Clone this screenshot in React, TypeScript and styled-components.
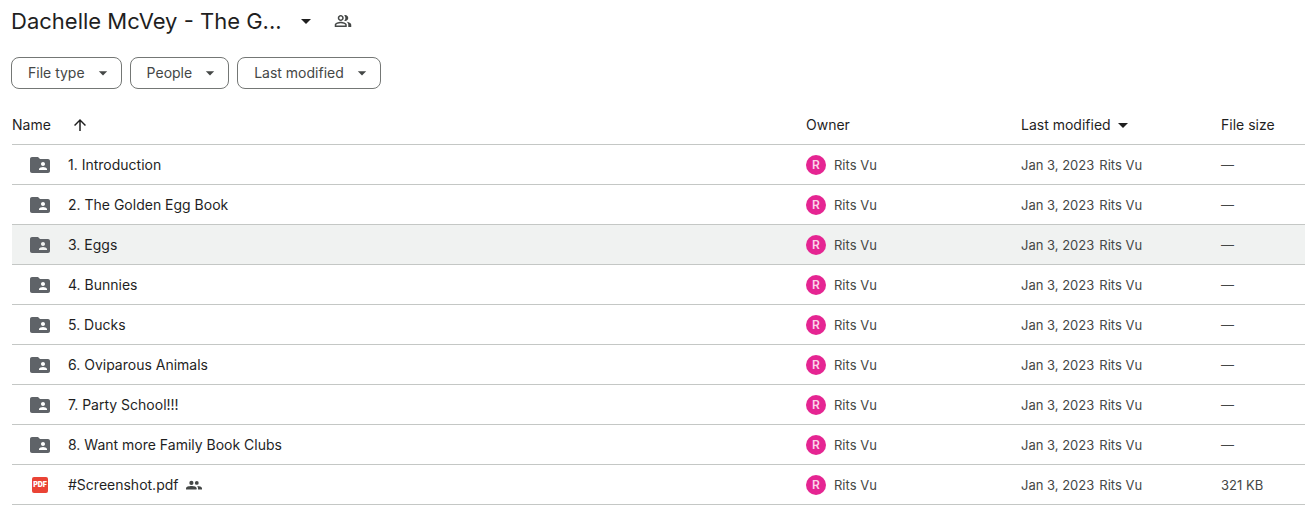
import React from 'react';
import styled, { createGlobalStyle } from 'styled-components';
import { MdArrowDropDown, MdArrowUpward, MdFolderShared, MdOutlinePeopleAlt } from 'react-icons/md';

const GlobalStyle = createGlobalStyle`
  *, *::before, *::after { box-sizing: border-box; }
  body {
    margin: 0;
    background: #fff;
    color: #1f1f1f;
    font-family: Inter, Roboto, sans-serif;
    font-size: 14px;
    line-height: 20px;
  }
  button { font: inherit; color: inherit; background: none; border: 0; padding: 0; cursor: pointer; }
  svg { display: block; flex: none; }
`;

const Page = styled.main`
  padding: 4px 0 16px 11px;
`;

const TitleBar = styled.header`
  display: flex;
  align-items: center;
  gap: 16px;
  height: 34px;
`;

const Heading = styled.h1`
  margin: 0;
  font-size: 22px;
  font-weight: 400;
  line-height: 32px;
`;

const TitleButton = styled.button`
  display: flex;
  align-items: center;
  gap: 12px;
`;

const IconButton = styled.button`
  display: flex;
  color: #444746;
`;

const Filters = styled.div`
  display: flex;
  gap: 8px;
  margin-top: 19px;
`;

const Chip = styled.button`
  display: flex;
  align-items: center;
  gap: 8px;
  height: 32px;
  padding: 0 8px 0 16px;
  border: 1px solid #747775;
  border-radius: 8px;
  color: #444746;
`;

const FileTable = styled.table`
  width: calc(100% - 1px);
  margin: 16px 0 0 1px;
  border-collapse: separate;
  border-spacing: 0;
  table-layout: fixed;
`;

const HeaderCell = styled.th<{ $width?: number }>`
  width: ${({ $width }) => ($width ? `${$width}px` : 'auto')};
  height: 40px;
  padding: 0;
  border-bottom: 1px solid #c4c7c5;
  font-weight: 400;
  text-align: left;
`;

const SortButton = styled.button<{ $gap?: number }>`
  display: flex;
  align-items: center;
  gap: ${({ $gap = 0 }) => $gap}px;
`;

const Row = styled.tr<{ $active?: boolean }>`
  background: ${({ $active }) => ($active ? '#f0f2f1' : 'transparent')};
`;

const Cell = styled.td`
  height: 40px;
  padding: 0;
  border-bottom: 1px solid #c4c7c5;
  color: #444746;
  font-size: 13px;
  white-space: nowrap;
`;

const FileName = styled.div`
  display: flex;
  align-items: center;
  gap: 8px;
  padding-left: 16px;
  color: #1f1f1f;
  font-size: 14px;
`;

const FileIcon = styled.span`
  display: flex;
  justify-content: center;
  width: 24px;
  margin-right: 8px;
  color: #5f6368;
`;

const PdfBadge = styled.span`
  width: 16px;
  height: 16px;
  border-radius: 2px;
  background: #ea4335;
  color: #fff;
  font-size: 7px;
  font-weight: 900;
  line-height: 16px;
  text-align: center;
`;

const Owner = styled.div`
  display: flex;
  align-items: center;
  gap: 8px;
`;

const Avatar = styled.span`
  width: 20px;
  height: 20px;
  border-radius: 50%;
  background: #e52592;
  color: #fbd3e9;
  font-size: 12px;
  font-weight: 600;
  line-height: 20px;
  text-align: center;
`;

const Modified = styled.div`
  display: flex;
  gap: 5px;
`;

const SharedIcon = () => (
  <svg width="16" height="16" viewBox="0 0 16 16" fill="#444746" role="img" aria-label="Shared">
    <circle cx="5.4" cy="5.9" r="2.1" />
    <circle cx="10.8" cy="5.9" r="1.9" />
    <path d="M0 12.6V11.3C0 9.8 3 9.1 5.4 9.1S10.6 9.8 10.6 11.3V12.6Z" />
    <path d="M11.2 9.1C13.3 9.2 16 9.9 16 11.3V12.6H12V11.3C12 10.4 11.8 9.7 11.2 9.1Z" />
  </svg>
);

type Entry = { name: string; kind: 'folder' | 'pdf'; size: string; active?: boolean };

const entries: Entry[] = [
  { name: '1. Introduction', kind: 'folder', size: '—' },
  { name: '2. The Golden Egg Book', kind: 'folder', size: '—' },
  { name: '3. Eggs', kind: 'folder', size: '—', active: true },
  { name: '4. Bunnies', kind: 'folder', size: '—' },
  { name: '5. Ducks', kind: 'folder', size: '—' },
  { name: '6. Oviparous Animals', kind: 'folder', size: '—' },
  { name: '7. Party School!!!', kind: 'folder', size: '—' },
  { name: '8. Want more Family Book Clubs', kind: 'folder', size: '—' },
  { name: '#Screenshot.pdf', kind: 'pdf', size: '321 KB' },
];

const filters = ['File type', 'People', 'Last modified'];

export default function App() {
  return (
    <>
      <GlobalStyle />
      <Page>
        <TitleBar>
          <Heading>
            <TitleButton type="button">
              Dachelle McVey - The G...
              <MdArrowDropDown size={24} />
            </TitleButton>
          </Heading>
          <IconButton type="button" aria-label="Manage access">
            <MdOutlinePeopleAlt size={18} />
          </IconButton>
        </TitleBar>
        <Filters>
          {filters.map((label) => (
            <Chip key={label} type="button">
              {label}
              <MdArrowDropDown size={20} />
            </Chip>
          ))}
        </Filters>
        <FileTable>
          <thead>
            <tr>
              <HeaderCell scope="col" aria-sort="ascending">
                <SortButton type="button" $gap={20}>
                  Name
                  <MdArrowUpward size={18} />
                </SortButton>
              </HeaderCell>
              <HeaderCell scope="col" $width={215}>Owner</HeaderCell>
              <HeaderCell scope="col" $width={200}>
                <SortButton type="button">
                  Last modified
                  <MdArrowDropDown size={24} />
                </SortButton>
              </HeaderCell>
              <HeaderCell scope="col" $width={84}>File size</HeaderCell>
            </tr>
          </thead>
          <tbody>
            {entries.map(({ name, kind, size, active }) => (
              <Row key={name} $active={active}>
                <Cell>
                  <FileName>
                    <FileIcon>
                      {kind === 'folder' ? <MdFolderShared size={24} /> : <PdfBadge>PDF</PdfBadge>}
                    </FileIcon>
                    {name}
                    {kind === 'pdf' && <SharedIcon />}
                  </FileName>
                </Cell>
                <Cell>
                  <Owner>
                    <Avatar>R</Avatar>
                    Rits Vu
                  </Owner>
                </Cell>
                <Cell>
                  <Modified>
                    <span>Jan 3, 2023</span>
                    <span>Rits Vu</span>
                  </Modified>
                </Cell>
                <Cell>{size}</Cell>
              </Row>
            ))}
          </tbody>
        </FileTable>
      </Page>
    </>
  );
}
